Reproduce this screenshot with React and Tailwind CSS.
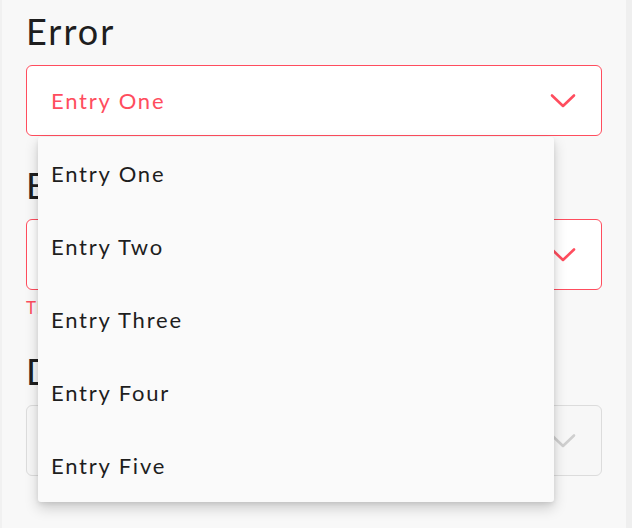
import React from "react";

const entries = ["Entry One", "Entry Two", "Entry Three", "Entry Four", "Entry Five"];

function Chevron({ color }) {
  return (
    <svg width="26" height="16" viewBox="0 0 26 16" fill="none">
      <path d="M2 2.5 L13 13 L24 2.5" stroke={color} strokeWidth="2.6" strokeLinecap="round" strokeLinejoin="round" />
    </svg>
  );
}

function Field({ label, value, disabled, helper }) {
  const border = disabled ? "border-[#dcdcdc]" : "border-[#ff4d5e]";
  return (
    <div className="flex flex-col">
      <div className="h-[65px] pt-[7px] text-[36px] leading-[48px] tracking-[2px] text-[#1e1e1e]">{label}</div>
      <div className={`h-[71px] rounded-[6px] border-[1.5px] ${border} ${disabled ? "bg-[#f7f7f7]" : "bg-white"} flex items-center justify-between pl-[24px] pr-[25px]`}>
        <span className="text-[22px] tracking-[1.8px] text-[#ff4d5e]">{value}</span>
        <Chevron color={disabled ? "#cfcfcf" : "#ff4d5e"} />
      </div>
      {helper && <div className="h-[32px] pt-[6px] text-[17px] leading-[24px] tracking-[1px] text-[#ff4d5e]">{helper}</div>}
    </div>
  );
}

export default function App() {
  return (
    <div className="relative w-[632px] h-[528px] bg-[#f8f8f8] overflow-hidden" style={{ fontFamily: "Lato, 'Noto Sans', sans-serif" }}>
      <div className="absolute left-0 top-0 w-[2px] h-full bg-[#f1f1f1]" />
      <div className="absolute right-0 top-0 w-[6px] h-full bg-[#efefef]" />
      <div className="flex flex-col gap-[18px] pl-[26px] pr-[30px]">
        <Field label="Error" value="Entry One" />
        <Field label="Error" value="" helper="This field is required" />
        <Field label="Disabled" value="" disabled />
      </div>

      <div className="absolute left-[38px] top-[137px] w-[516px] bg-[#fafafa] rounded-[3px] shadow-[0_6px_14px_rgba(0,0,0,0.18),0_2px_4px_rgba(0,0,0,0.08)]">
        {entries.map((e) => (
          <div key={e} className="h-[73px] flex items-center pl-[13px] text-[22px] tracking-[1.8px] text-[#1e1e1e]">
            {e}
          </div>
        ))}
      </div>
    </div>
  );
}
